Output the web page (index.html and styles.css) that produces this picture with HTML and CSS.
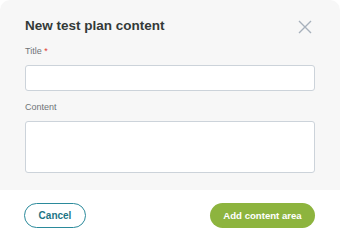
FILE: index.html
```html
<!DOCTYPE html>
<html lang="en">
<head>
  <meta charset="UTF-8" />
  <meta name="viewport" content="width=device-width,initial-scale=1.0" />
  <title>New test plan content</title>
  <link rel="stylesheet" href="styles.css">
</head>
<body>
  <div class="modal">
    <section class="modal-body">
      <header class="modal-head">
        <h1>New test plan content</h1>
        <button class="close" aria-label="Close">
          <svg width="14" height="14" viewBox="0 0 14 14">
            <path d="M1 1L13 13M13 1L1 13" stroke="#a7b1bc" stroke-width="1.4" fill="none"/>
          </svg>
        </button>
      </header>

      <label class="field">
        <span class="label">Title <em>*</em></span>
        <input type="text" class="input" />
      </label>

      <label class="field">
        <span class="label">Content</span>
        <textarea class="input area"></textarea>
      </label>
    </section>

    <footer class="modal-foot">
      <button class="btn cancel">Cancel</button>
      <button class="btn add">Add content area</button>
    </footer>
  </div>
</body>
</html>
```

FILE: styles.css
```css
*{box-sizing:border-box;}
body{
  margin:0;
  font-family:"Liberation Sans",Arial,sans-serif;
  background:#fff;
}

.modal{width:340px;height:240px;display:flex;flex-direction:column;}

.modal-body{
  background:#f7f7f7;
  border-radius:10px 10px 0 0;
  padding:13px 25px 17px;
  height:190px;
}
.modal-head{display:flex;justify-content:space-between;align-items:center;height:25px;margin-bottom:8px;}
.modal-head h1{margin:0;font-size:13.5px;font-weight:700;color:#333a38;}
.close{border:0;background:none;padding:0;margin:2px 3px 0 0;width:14px;height:14px;display:flex;cursor:pointer;}

.field{display:flex;flex-direction:column;}
.label{font-size:9px;color:#6f7478;height:13px;margin-bottom:6px;}
.label em{font-style:normal;color:#e03a2f;}

.input{
  display:block;
  width:290px;
  height:26px;
  margin:0 0 11px;
  border:1px solid #ccd3da;
  border-radius:3px;
  background:#fff;
  font:inherit;
}
.area{height:52px;margin:0;resize:none;}

.modal-foot{
  display:flex;
  justify-content:space-between;
  align-items:center;
  padding:0 25px 0 24px;
  height:50px;
}
.btn{
  height:25px;
  border-radius:13px;
  font:700 10px "Liberation Sans",Arial,sans-serif;
  cursor:pointer;
}
.cancel{width:62px;border:1px solid #2b8a9b;background:#fff;color:#1e7585;}
.add{width:105px;border:0;background:#8db43e;color:#fff;font-size:9.6px;}
```
